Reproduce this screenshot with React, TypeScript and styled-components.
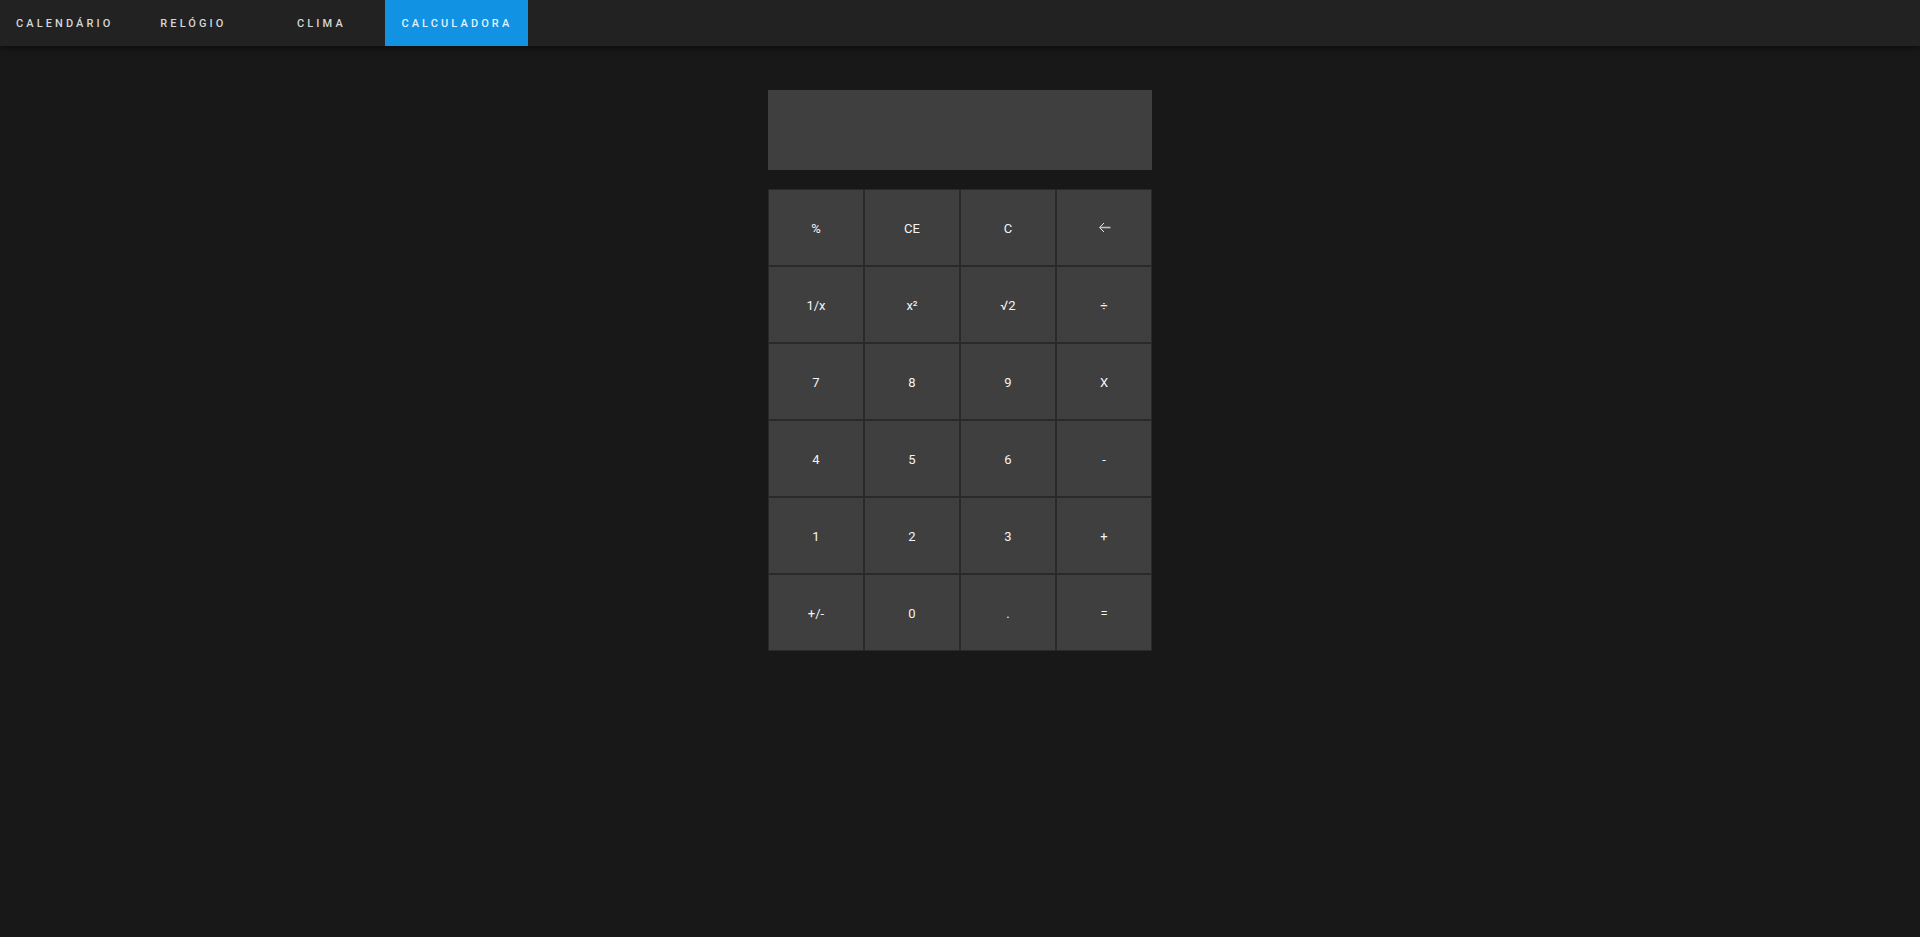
import * as React from 'react';
import styled, { createGlobalStyle } from 'styled-components';

const GlobalStyle = createGlobalStyle`
    html, body {
        margin: 0;
        padding: 0;
        background: #181818;
    }

    body {
        font-family: Roboto, "Liberation Sans", sans-serif;
        min-height: 100vh;
    }
`;

const Page = styled.div`
    min-height: 100vh;
    background: #181818;
`;

const Header = styled.header`
    display: flex;
    height: 46px;
    background: #222222;
    box-shadow: 0 2px 6px rgba(0, 0, 0, 0.55);
    position: relative;
    z-index: 1;
`;

const Tab = styled.div<{ $active?: boolean }>`
    display: flex;
    align-items: center;
    justify-content: center;
    min-width: 128px;
    padding: 0 16px;
    box-sizing: border-box;
    white-space: nowrap;
    font-size: 11px;
    font-weight: 500;
    letter-spacing: 3.1px;
    text-transform: uppercase;
    color: ${(p) => (p.$active ? '#e4f0fb' : '#d6d6d6')};
    background: ${(p) => (p.$active ? '#1192e2' : 'transparent')};
    cursor: pointer;
`;

const Main = styled.main`
    display: flex;
    flex-direction: column;
    align-items: center;
    padding-top: 44px;
`;

const Display = styled.div`
    width: 384px;
    height: 80px;
    background: #3f3f3f;
`;

const Keypad = styled.div`
    margin-top: 19px;
    display: grid;
    grid-template-columns: repeat(4, 96px);
    grid-auto-rows: 77px;
    padding-bottom: 1px;
`;

const Key = styled.button`
    display: flex;
    align-items: center;
    justify-content: center;
    margin: 0;
    padding: 2px 0 0;
    border: 1px solid #2a2a2a;
    background: #3f3f3f;
    color: #f4f4f4;
    font-family: Roboto, "Liberation Sans", sans-serif;
    font-size: 13px;
    cursor: pointer;
`;

const BackArrow = () => (
    <svg width="13" height="11" viewBox="0 0 13 11" fill="none" style={{ marginTop: -2 }}>
        <path d="M6 1 L1.5 5.5 L6 10" stroke="#e8e8e8" strokeWidth="1" />
        <path d="M2 5.5 H12.5" stroke="#bdbdbd" strokeWidth="1.6" />
    </svg>
);

const tabs = ['Calendário', 'Relógio', 'Clima', 'Calculadora'];

const keys: React.ReactNode[] = [
    '%', 'CE', 'C', <BackArrow key="back" />,
    '1/x', 'x²', '√2', '÷',
    '7', '8', '9', 'X',
    '4', '5', '6', '-',
    '1', '2', '3', '+',
    '+/-', '0', '.', '='
];

export default function App() {
    const [active, setActive] = React.useState(3);

    return (
        <Page>
            <GlobalStyle />
            <Header>
                {tabs.map((t, i) => (
                    <Tab key={t} $active={i === active} onClick={() => setActive(i)}>
                        {t}
                    </Tab>
                ))}
            </Header>
            <Main>
                <Display />
                <Keypad>
                    {keys.map((k, i) => (
                        <Key key={i}>{k}</Key>
                    ))}
                </Keypad>
            </Main>
        </Page>
    );
}
